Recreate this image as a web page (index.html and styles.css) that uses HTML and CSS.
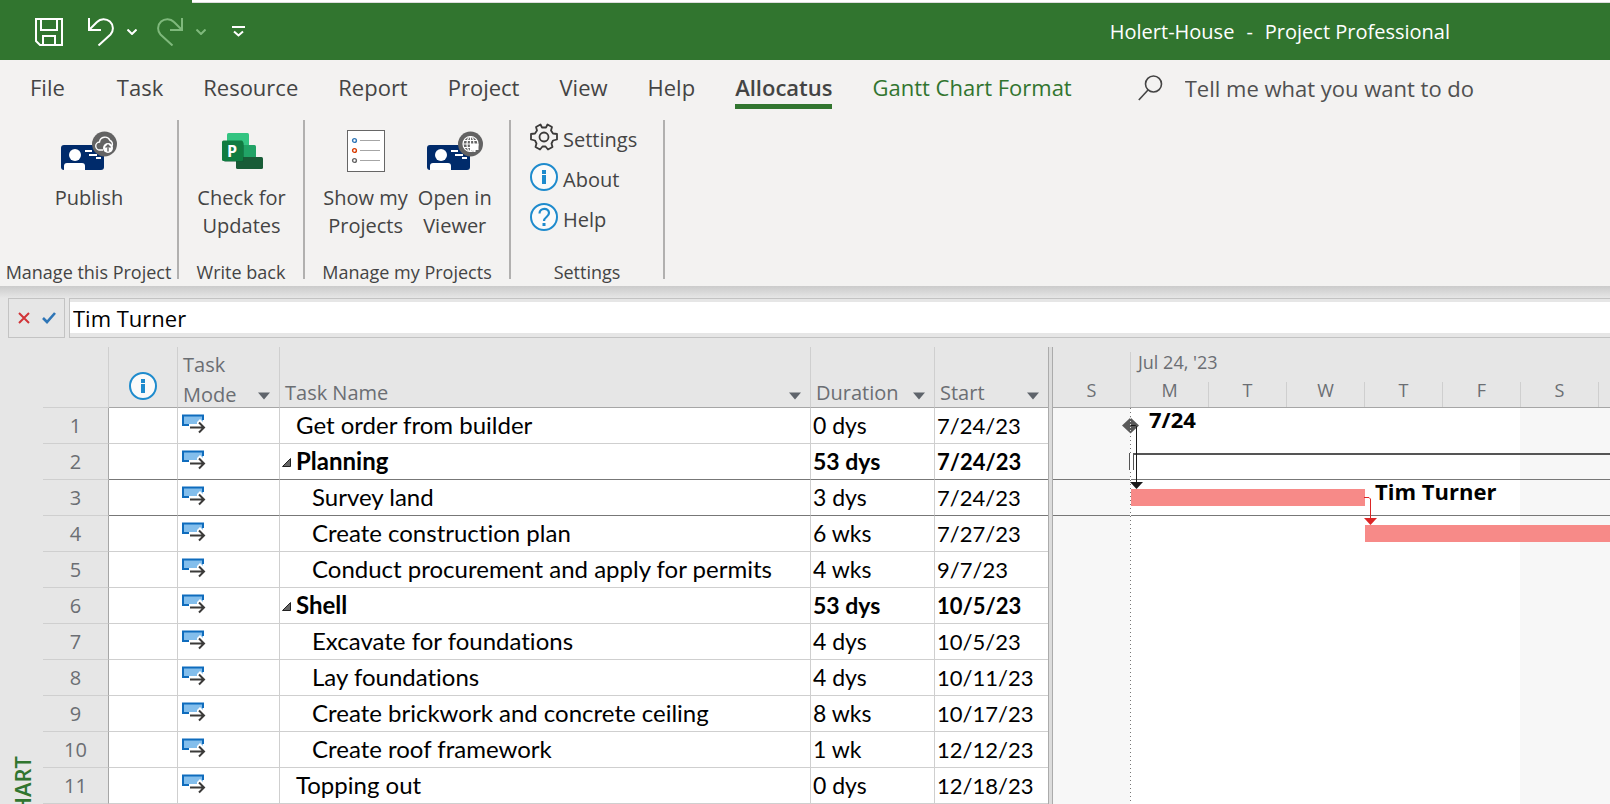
FILE: index.html
```
<!DOCTYPE html>
<html lang="en">
<head>
<meta charset="utf-8">
<title>Holert-House - Project Professional</title>
<link rel="stylesheet" href="styles.css">
</head>
<body>
<svg class="sprite" aria-hidden="true">
  <symbol id="mode" viewBox="0 0 24 20">
    <path d="M1 1.500H21V11.500H1Z" fill="#83beec"/>
    <path d="M7 11H1V1.500H21V6" fill="none" stroke="#0f6cbd" stroke-width="2"/>
    <path d="M15 8l3-3 5 5v2H7v-2h8z" fill="#fff"/>
    <path d="M8 13.500H22M17 8.500l5 5-5 5" fill="none" stroke="#3b3a39" stroke-width="2"/>
  </symbol>
  <symbol id="info" viewBox="0 0 28 28">
    <circle cx="14" cy="14" r="13" fill="#fafafa" stroke="#1e8bcd" stroke-width="2"/>
    <path d="M14 7v4M14 12v9" stroke="#1e8bcd" stroke-width="4"/>
  </symbol>
  <symbol id="card" viewBox="0 0 43 26">
    <rect width="43" height="25" rx="3" fill="#002b6b"/>
    <circle cx="14" cy="10" r="6" fill="#fff"/>
    <path d="M3 25v-4q0-3 3-3h15q3 0 3 3v4z" fill="#fff"/>
    <path d="M24 6h7M28 10h8M35 13h5" stroke="#fff" stroke-width="2"/>
  </symbol>
  <symbol id="caret" viewBox="0 0 12 8"><path d="M0 .5h12L6 7.500z" fill="#5f646b"/></symbol>
</svg>

<header class="titlebar">
  <div class="title-strip"></div>
  <div class="title-row">
    <div class="quick">
      <button class="q-save" aria-label="Save"><svg width="28" height="28" viewBox="0 0 28 28" fill="none" stroke="#fff" stroke-width="2"><path d="M1 1h26v26H5l-4-4zM6 1v11h16V1M8 27v-9h12v9"/></svg></button>
      <button class="q-undo" aria-label="Undo"><svg width="26" height="28" viewBox="0 0 26 28" fill="none" stroke="#fff" stroke-width="2"><path d="M1 0v12h12M1 12L9 4a9.200 9.200 0 0 1 13.500 12.500L10.500 27.500"/></svg></button>
      <button class="q-more" aria-label="Undo list"><svg width="10" height="6" viewBox="0 0 10 6" fill="none" stroke="#fff" stroke-width="2"><path d="M.5.500L5 5 9.500.500"/></svg></button>
      <button class="q-redo" aria-label="Redo"><svg width="26" height="28" viewBox="0 0 26 28" fill="none" stroke="#7fb97c" stroke-width="2"><path d="M25 0v12H13M25 12L17 4A9.200 9.200 0 0 0 3.500 16.500L15.500 27.500"/></svg></button>
      <button class="q-more" aria-label="Redo list"><svg width="10" height="6" viewBox="0 0 10 6" fill="none" stroke="#7fb97c" stroke-width="2"><path d="M.5.500L5 5 9.500.500"/></svg></button>
      <button class="q-custom" aria-label="Customize toolbar"><svg width="13" height="11" viewBox="0 0 13 11" fill="none" stroke="#fff" stroke-width="2"><path d="M0 1h13M2 5.500l4.500 4L11 5.500"/></svg></button>
    </div>
    <div class="title"><span>Holert-House</span><span>-</span><span>Project Professional</span></div>
  </div>
</header>

<nav class="tabs">
  <button class="tab tab-file">File</button>
  <button class="tab">Task</button>
  <button class="tab">Resource</button>
  <button class="tab">Report</button>
  <button class="tab">Project</button>
  <button class="tab">View</button>
  <button class="tab">Help</button>
  <button class="tab active">Allocatus</button>
  <button class="tab context">Gantt Chart Format</button>
  <label class="tell"><svg width="25" height="26" viewBox="0 0 25 26" fill="none" stroke="#444" stroke-width="1.600"><circle cx="15.500" cy="9" r="8"/><path d="M10 15L.8 25"/></svg><input type="text" placeholder="Tell me what you want to do" aria-label="Tell me what you want to do"></label>
</nav>

<section class="ribbon">
  <div class="group g-publish">
    <div class="tools">
      <button class="big">
        <svg width="56" height="42" viewBox="0 0 56 42"><use href="#card" x="0" y="15" width="43" height="26"/><circle cx="43.500" cy="14" r="12.500" fill="#636363"/><path d="M42 20h-3a4 4 0 0 1-.5-8 5.500 5.500 0 0 1 10.500-1.500A4 4 0 0 1 51 16" fill="none" stroke="#fff" stroke-width="1.400"/><circle cx="47" cy="18" r="5" fill="#fff"/><path d="M47 21.500v-6M44.500 17.500l2.500-2.500 2.500 2.500" fill="none" stroke="#636363" stroke-width="1.400"/></svg>
        <span>Publish</span>
      </button>
    </div>
    <div class="caption">Manage this Project</div>
  </div>
  <div class="group g-write">
    <div class="tools">
      <button class="big">
        <svg width="42" height="42" viewBox="0 0 42 42"><rect x="6" y="3" width="22" height="20" rx="1.500" fill="#33c481"/><rect x="16" y="15" width="19" height="14" rx="1.500" fill="#21a366"/><rect x="15" y="27" width="27" height="12" rx="1.500" fill="#185c37"/><rect x="3" y="12" width="20" height="20" rx="1.500" fill="#0b5c33" opacity=".5"/><rect x="1" y="10.500" width="21" height="20.500" rx="1.500" fill="#107c41"/><text x="6" y="27" font-family="Open Sans, sans-serif" font-size="16" font-weight="700" fill="#fff">P</text></svg>
        <span>Check for<br>Updates</span>
      </button>
    </div>
    <div class="caption">Write back</div>
  </div>
  <div class="group g-my">
    <div class="tools">
      <button class="big">
        <svg width="38" height="42" viewBox="0 0 38 42"><rect x=".5" y=".5" width="37" height="41" fill="#fff" stroke="#666"/><path d="M13 10.500h20M13 20.500h20M13 30.500h20" stroke="#a6a6a6"/><g fill="none" stroke-width="1.400"><circle cx="7.500" cy="10.500" r="1.900" stroke="#2e75b6"/><circle cx="7.500" cy="20.500" r="1.900" stroke="#d83b01"/><circle cx="7.500" cy="30.500" r="1.900" stroke="#666"/></g></svg>
        <span>Show my<br>Projects</span>
      </button>
      <button class="big">
        <svg width="56" height="42" viewBox="0 0 56 42"><use href="#card" x="0" y="15" width="43" height="26"/><circle cx="43.500" cy="14" r="12.500" fill="#636363"/><g fill="none" stroke="#fff" stroke-width="1.200"><circle cx="43.500" cy="14" r="7.500"/><ellipse cx="43.500" cy="14" rx="3.500" ry="7.500"/><path d="M36 14h15M37 10.500h13M37 17.500h13M43.500 6.500v15"/></g><path d="M43.500 14h8v6h-3v2h-2v-2h-3z" fill="#fff"/></svg>
        <span>Open in<br>Viewer</span>
      </button>
    </div>
    <div class="caption">Manage my Projects</div>
  </div>
  <div class="group g-settings">
    <div class="list">
      <button class="small"><svg width="28" height="28" viewBox="0 0 28 28" fill="none" stroke="#3b3a39" stroke-width="1.800" stroke-linejoin="round"><path d="M10.500 1.500L12 4.500H16L17.500 1.500L22 4L21 7.500L23 10.500L27 11V16.500L23 17.500L21.500 20.500L22.500 24L18 26.500L15.500 23.500H12.500L10 26.500L5.500 24L6.500 20.500L5 17.500L1 16.500V11L5 10.500L7 7.500L6 4Z"/><circle cx="14" cy="14" r="4.500"/></svg>Settings</button>
      <button class="small"><svg width="28" height="28"><use href="#info"/></svg>About</button>
      <button class="small"><svg width="28" height="28" viewBox="0 0 28 28"><circle cx="14" cy="14" r="13" fill="#fafafa" stroke="#1e8bcd" stroke-width="2"/><path d="M9.500 10.500c0-6 9.500-6 9.500-.5 0 4-5 4-5 8" fill="none" stroke="#1e8bcd" stroke-width="2.200"/><path d="M14 20v3" stroke="#1e8bcd" stroke-width="3"/></svg>Help</button>
    </div>
    <div class="caption">Settings</div>
  </div>
</section>

<div class="entry">
  <div class="entry-actions">
    <button aria-label="Cancel"><svg width="12" height="12" viewBox="0 0 12 12" stroke="#d13438" stroke-width="2"><path d="M1 1l10 10M11 1L1 11"/></svg></button>
    <button aria-label="Accept"><svg width="14" height="12" viewBox="0 0 14 12" fill="none" stroke="#2e75b6" stroke-width="2.600"><path d="M1 6l4 4 8-9"/></svg></button>
  </div>
  <input class="entry-input" type="text" value="Tim Turner" aria-label="Cell entry">
</div>

<main class="work">
  <aside class="side"><span>GANTT CHART</span></aside>
  <table class="sheet">
    <colgroup><col class="c-num"><col class="c-info"><col class="c-mode"><col class="c-name"><col class="c-dur"><col class="c-start"></colgroup>
    <thead>
      <tr>
        <th></th>
        <th class="h-info"><svg width="28" height="28"><use href="#info"/></svg></th>
        <th><div class="head two-line"><span>Task<br>Mode</span><button aria-label="Filter mode"><svg width="12" height="8"><use href="#caret"/></svg></button></div></th>
        <th><div class="head"><span>Task Name</span><button aria-label="Filter name"><svg width="12" height="8"><use href="#caret"/></svg></button></div></th>
        <th><div class="head"><span>Duration</span><button aria-label="Filter duration"><svg width="12" height="8"><use href="#caret"/></svg></button></div></th>
        <th><div class="head"><span>Start</span><button aria-label="Filter start"><svg width="12" height="8"><use href="#caret"/></svg></button></div></th>
      </tr>
    </thead>
    <tbody>
      <tr><td>1</td><td></td><td><svg width="24" height="20"><use href="#mode"/></svg></td><td class="top">Get order from builder</td><td>0 dys</td><td>7/24/23</td></tr>
      <tr class="sum mark"><td>2</td><td></td><td><svg width="24" height="20"><use href="#mode"/></svg></td><td class="top"><button class="fold" aria-label="Collapse"><svg width="9" height="9" viewBox="0 0 9 9"><path d="M.5 8.500h8v-8z" fill="#666" stroke="#222"/></svg></button>Planning</td><td>53 dys</td><td>7/24/23</td></tr>
      <tr class="mark"><td>3</td><td></td><td><svg width="24" height="20"><use href="#mode"/></svg></td><td class="sub">Survey land</td><td>3 dys</td><td>7/24/23</td></tr>
      <tr><td>4</td><td></td><td><svg width="24" height="20"><use href="#mode"/></svg></td><td class="sub">Create construction plan</td><td>6 wks</td><td>7/27/23</td></tr>
      <tr><td>5</td><td></td><td><svg width="24" height="20"><use href="#mode"/></svg></td><td class="sub">Conduct procurement and apply for permits</td><td>4 wks</td><td>9/7/23</td></tr>
      <tr class="sum"><td>6</td><td></td><td><svg width="24" height="20"><use href="#mode"/></svg></td><td class="top"><button class="fold" aria-label="Collapse"><svg width="9" height="9" viewBox="0 0 9 9"><path d="M.5 8.500h8v-8z" fill="#666" stroke="#222"/></svg></button>Shell</td><td>53 dys</td><td>10/5/23</td></tr>
      <tr><td>7</td><td></td><td><svg width="24" height="20"><use href="#mode"/></svg></td><td class="sub">Excavate for foundations</td><td>4 dys</td><td>10/5/23</td></tr>
      <tr><td>8</td><td></td><td><svg width="24" height="20"><use href="#mode"/></svg></td><td class="sub">Lay foundations</td><td>4 dys</td><td>10/11/23</td></tr>
      <tr><td>9</td><td></td><td><svg width="24" height="20"><use href="#mode"/></svg></td><td class="sub">Create brickwork and concrete ceiling</td><td>8 wks</td><td>10/17/23</td></tr>
      <tr><td>10</td><td></td><td><svg width="24" height="20"><use href="#mode"/></svg></td><td class="sub">Create roof framework</td><td>1 wk</td><td>12/12/23</td></tr>
      <tr><td>11</td><td></td><td><svg width="24" height="20"><use href="#mode"/></svg></td><td class="top">Topping out</td><td>0 dys</td><td>12/18/23</td></tr>
    </tbody>
  </table>
  <div class="splitter"></div>
  <section class="gantt">
    <div class="scale">
      <div class="week-prev"><span class="day">S</span></div>
      <div class="week">
        <div class="week-name">Jul 24, '23</div>
        <div class="days"><span class="day">M</span><span class="day">T</span><span class="day">W</span><span class="day">T</span><span class="day">F</span><span class="day">S</span><span class="day"></span></div>
      </div>
    </div>
    <div class="canvas">
      <div class="off off-sun"></div>
      <div class="off off-sat"></div>
      <div class="rule rule-2"></div>
      <div class="rule rule-3"></div>
      <div class="start-line"></div>
      <div class="summary"></div>
      <div class="bar bar-3"></div>
      <div class="bar bar-4"></div>
      <svg class="links" width="300" height="120" viewBox="0 0 300 120">
        <path d="M69 17.500l8.500-8 8.500 8-8.500 8z" fill="#595959"/>
        <path d="M77.500 10v15" stroke="#ddd" stroke-dasharray="1 2"/>
        <path d="M78 17.500h4.500l1 1V76" fill="none" stroke="#1a1a1a"/>
        <path d="M77 74h13l-6.500 7z" fill="#1a1a1a"/>
      </svg>
      <svg class="links link-red" width="14" height="30" viewBox="0 0 14 30">
        <path d="M0 1.500h5l1.500 1.500v20" fill="none" stroke="#dc2626"/>
        <path d="M0 22h13l-6.500 7z" fill="#dc2626"/>
      </svg>
      <span class="label label-1">7/24</span>
      <span class="label label-3">Tim Turner</span>
    </div>
  </section>
</main>
</body>
</html>
```
FILE: styles.css
```
* { box-sizing: border-box; }
html, body { height: 100%; }
body {
  margin: 0;
  display: flex;
  flex-direction: column;
  overflow: hidden;
  background: #e6e6e6;
  color: #444;
  font-family: "Open Sans", "Noto Sans", sans-serif;
  font-size: 20px;
}
button { border: 0; padding: 0; background: none; color: inherit; font: inherit; white-space: nowrap; }
svg { display: block; flex: none; }
.sprite { position: absolute; width: 0; height: 0; }

/* Title bar */
.titlebar { flex: none; height: 60px; background: #31752f; display: flex; flex-direction: column; }
.title-strip { height: 3px; margin-left: 192px; background: #fff; border-bottom: 1px solid #ddd; }
.title-row { flex: 1; display: flex; align-items: center; justify-content: space-between; padding: 0 160px 0 35px; color: #fff; }
.quick { display: flex; align-items: center; }
.q-undo { margin-left: 25px; }
.q-more { margin-left: 13px; }
.q-redo { margin-left: 20px; }
.q-custom { margin-left: 26px; }
.title { display: flex; gap: 12px; }

/* Tabs */
.tabs { flex: none; display: flex; align-items: flex-start; gap: 40px; height: 55px; padding: 10px 30px 0; background: #f3f2f1; font-size: 22px; line-height: 32px; }
.tab { height: 39px; border-bottom: 5px solid transparent; }
.tab-file { margin-right: 12px; }
.active { font-weight: 600; border-bottom-color: #31752f; }
.context { color: #31752f; }
.tell { flex: 1; display: flex; align-items: center; gap: 22px; margin-left: 26px; height: 35px; }
.tell input { flex: 1; min-width: 0; border: 0; padding: 0; background: none; font: inherit; color: #444; }
.tell input::placeholder { color: #505050; opacity: 1; }

/* Ribbon */
.ribbon { flex: none; display: flex; height: 171px; padding-top: 5px; padding-bottom: 7px; background: #f3f2f1; }
.group { display: flex; flex-direction: column; justify-content: space-between; border-right: 2px solid #b1b0af; }
.g-publish { width: 179px; }
.g-write { width: 126px; }
.g-my { width: 206px; }
.g-settings { width: 154px; }
.tools { display: flex; justify-content: center; gap: 10px; padding: 10px 0 0 1px; }
.big { display: flex; flex-direction: column; align-items: center; gap: 12px; line-height: 28px; }
.caption { text-align: center; font-size: 18px; line-height: 14px; white-space: nowrap; }
.list { display: flex; flex-direction: column; gap: 8px; padding: 3px 0 0 19px; }
.small { display: flex; align-items: center; gap: 5px; height: 32px; }
.small svg { margin-bottom: 4px; }

/* Entry bar */
.entry { flex: none; display: flex; gap: 4px; height: 61px; padding: 12px 0 9px 8px; background: linear-gradient(#cbcbcb, #e6e6e6 12px); }
.entry-actions { display: flex; align-items: center; justify-content: center; gap: 12px; width: 57px; border: 1px solid #c3c3c3; }
.entry-input { flex: 1; min-width: 0; border: 1px solid #c3c3c3; border-right: 0; padding: 0 3px; background: linear-gradient(#e6e6e6 3px, #fff 3px, #fff 34px, #e6e6e6 34px); color: #000; font: inherit; font-size: 22px; }

/* Work area */
.work { flex: 1; min-height: 0; display: flex; overflow: hidden; align-items: stretch; }
.side { width: 43px; flex: none; overflow: hidden; padding: 409px 0 0 8px; color: #31752f; font-weight: 600; font-size: 22px; line-height: 28px; }
.side span { display: block; writing-mode: vertical-rl; transform: rotate(180deg); white-space: nowrap; }

.sheet { flex: none; align-self: flex-start; width: 1005px; table-layout: fixed; border-collapse: separate; border-spacing: 0; }
.c-num { width: 66px; }
.c-info { width: 69px; }
.c-mode { width: 102px; }
.c-name { width: 531px; }
.c-dur { width: 124px; }
.c-start { width: 113px; }
.sheet th { height: 61px; padding: 0; border-right: 1px solid #cfcfcf; border-bottom: 1px solid #a6a6a6; color: #6b6e73; font-weight: 400; vertical-align: bottom; text-align: left; }
.sheet th:first-child { border-bottom-color: #cfcfcf; }
.sheet th:last-child, .sheet td:last-child { border-right: 0; }
.h-info svg { margin: 0 auto 7px; }
.head { display: flex; align-items: flex-end; justify-content: space-between; padding: 0 9px 0 5px; line-height: 29px; }
.head button { padding-bottom: 7px; line-height: 8px; }
.two-line span { margin-bottom: -3px; line-height: 30px; }
.sheet td { height: 36px; padding: 0 2px; background: #fff; border-right: 1px solid #cfcfcf; border-bottom: 1px solid #cfcfcf; color: #000; font-family: Lato, "Open Sans", sans-serif; font-size: 23px; line-height: 35px; white-space: nowrap; font-variant-ligatures: none; }
.sheet td:first-child { background: #e6e6e6; color: #6b6e73; border-right-color: #a6a6a6; text-align: center; font-family: "Open Sans", sans-serif; font-size: 20px; }
.sheet td:nth-child(3) { padding: 0 4px; }
.sheet td:nth-child(3) svg { margin-bottom: 4px; }
.sheet td:nth-child(4) { font-size: 24px; line-height: 34px; padding-bottom: 1px; }
.sheet td:last-child { font-size: 22px; }
.sheet td.top { padding-left: 16px; }
.sheet td.sub { padding-left: 32px; }
.sum td:nth-child(n+4) { font-weight: 700; }
.mark td:nth-child(n+2) { border-bottom-color: #777; }
.fold { width: 14px; margin-left: -14px; text-align: left; }
.fold svg { display: inline-block; vertical-align: 3px; }
.splitter { flex: none; width: 5px; border: 1px solid #ababab; border-width: 0 1px; background: #dcdcdc; }

/* Timescale and chart */
.gantt { flex: 1; min-width: 0; display: flex; flex-direction: column; overflow: hidden; }
.scale { flex: none; display: flex; height: 61px; padding-top: 5px; border-bottom: 1px solid #a6a6a6; color: #6b6e73; font-size: 18px; }
.week-prev { flex: none; display: flex; align-items: flex-end; width: 78px; border-right: 1px solid #cfcfcf; }
.week-name { height: 30px; padding-left: 7px; line-height: 20px; }
.days { display: flex; }
.day { flex: none; width: 78px; height: 25px; line-height: 16px; text-align: center; border-right: 1px solid #cfcfcf; }
.week-prev .day { width: 77px; border: 0; }
.canvas { flex: 1; position: relative; overflow: hidden; background: #fff; }
.canvas > * { position: absolute; }
.off { top: 0; bottom: 0; background: #f7f7f7; }
.off-sun { left: 0; width: 77px; }
.off-sat { left: 467px; width: 156px; }
.rule { left: 0; right: 0; height: 1px; background: #777; }
.rule-2 { top: 71px; }
.rule-3 { top: 107px; }
.start-line { top: 0; bottom: 0; left: 77px; width: 1px; background: repeating-linear-gradient(#777 0 1px, #fff 1px 4px); }
.summary { top: 45px; left: 76px; right: 0; height: 2px; background: #555; }
.summary::before { content: ""; position: absolute; left: 0; top: 0; width: 3px; height: 17px; border: 1px solid #555; border-width: 0 1px; background: #fff; }
.bar { height: 17px; background: #f78a88; }
.bar-3 { top: 81px; left: 78px; width: 234px; }
.bar-4 { top: 117px; left: 312px; right: 0; }
.links { left: 0; top: 0; }
.link-red { left: 311px; top: 88px; }
.label { color: #000; font-weight: 700; font-size: 22px; line-height: 22px; white-space: nowrap; }
.label-1 { left: 96px; top: 0; }
.label-3 { left: 322px; top: 72px; }
```
